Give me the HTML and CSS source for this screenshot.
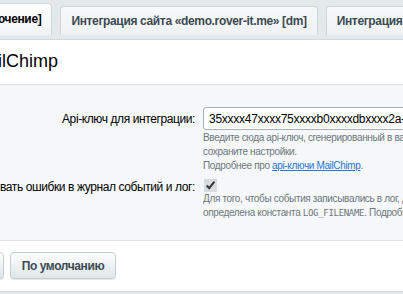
FILE: index.html
```html
<!DOCTYPE html>
<html lang="ru">
<head>
    <meta charset="UTF-8">
    <title>Настройки модуля</title>
    <link rel="stylesheet" href="styles.css">
</head>
<body>
    <div id="tabs">
        <div class="tab tab-active">[Подключение]</div>
        <div class="tab">Интеграция сайта «demo.rover-it.me» [dm]</div>
        <div class="tab">Интеграция сайта «shop.rover-it.me» [sh]</div>
    </div>
    <div id="panel">
        <div class="panel-title">MailChimp</div>
        <div class="form">
            <div class="row">
                <label class="row-label" for="api-key"><span>Api-ключ для интеграции:</span></label>
                <div class="row-field">
                    <input type="text" id="api-key" class="text-input" value="35xxxx47xxxx75xxxxb0xxxxdbxxxx2a-us11">
                    <div class="hint">
                        Введите сюда api-ключ, сгенерированный в вашем аккаунте MailChimp, и<br>
                        сохраните настройки.<br>
                        Подробнее про <a href="#">api-ключи MailChimp</a>.
                    </div>
                </div>
            </div>
            <div class="row row-check">
                <label class="row-label" for="write-log"><span>Записывать ошибки в журнал событий и лог:</span></label>
                <div class="row-field">
                    <input type="checkbox" id="write-log" checked>
                    <div class="hint">
                        Для того, чтобы события записывались в лог, должна быть<br>
                        определена константа <code>LOG_FILENAME</code>. Подробнее
                    </div>
                </div>
            </div>
        </div>
        <div class="buttons">
            <button class="btn">Сохранить</button>
            <button class="btn">По умолчанию</button>
        </div>
    </div>
</body>
</html>
```

FILE: styles.css
```css
body {
    margin: 0;
    padding: 0;
    font-family: "Liberation Sans", Arial, sans-serif;
    background-color: #e3e9eb;
    overflow: hidden;
    width: 403px;
    height: 294px;
}
#tabs {
    display: flex;
    align-items: flex-end;
    gap: 8px;
    height: 35px;
    margin-left: -55px;
    white-space: nowrap;
    overflow: hidden;
}
.tab {
    height: 28px;
    line-height: 28px;
    padding: 0 10px;
    font-size: 12px;
    letter-spacing: -0.35px;
    font-weight: bold;
    color: #3d4a52;
    background: linear-gradient(#f7f9f9, #eef2f3);
    border: 1px solid #cfd6d9;
    border-bottom: none;
    border-radius: 4px 4px 0 0;
    flex-shrink: 0;
}
.tab-active {
    height: 31px;
    line-height: 31px;
    color: #000;
    background: linear-gradient(#fdfefe, #f1f4f5);
}
#panel {
    margin-top: 4px;
    border-top: 1px solid #d2d9dc;
    background-color: #fff;
}
.panel-title {
    height: 44px;
    line-height: 42px;
    font-size: 18px;
    color: #000;
    margin-left: -27px;
}
.form {
    background-color: #f5f7f8;
    border-top: 1px solid #dde2e4;
    padding: 22px 0 20px;
}
.row {
    display: grid;
    grid-template-columns: 195px 1fr;
    column-gap: 8px;
}
.row-check {
    margin-top: 6px;
}
.row-label {
    display: flex;
    justify-content: flex-end;
    white-space: nowrap;
    overflow: hidden;
    font-size: 12px;
    letter-spacing: -0.4px;
    color: #000;
}
.row-label span {
    flex-shrink: 0;
}
.row:first-child .row-label {
    padding-top: 5px;
}
.row-check .row-label {
    padding-top: 1px;
}
.row-field {
    white-space: nowrap;
    overflow: hidden;
}
.text-input {
    box-sizing: border-box;
    width: 240px;
    height: 23px;
    padding: 0 5px;
    border: 1px solid #a7b0b4;
    border-radius: 3px;
    font-family: "Liberation Sans", Arial, sans-serif;
    font-size: 12px;
    letter-spacing: -0.25px;
    color: #000;
    background-color: #fff;
}
.hint {
    font-size: 10px;
    letter-spacing: -0.35px;
    line-height: 14px;
    color: #6e787e;
}
.row:first-child .hint {
    margin-top: 1px;
}
.hint a {
    color: #2675d7;
}
.hint code {
    font-family: "DejaVu Sans Mono", monospace;
    font-size: 9px;
    letter-spacing: -0.3px;
}
#write-log {
    display: block;
    margin: 0 0 0 1px;
    width: 13px;
    height: 13px;
    accent-color: #d7dde0;
}
.buttons {
    display: flex;
    gap: 6px;
    padding: 11px 0 12px;
    margin-left: -81px;
    border-top: 1px solid #dde2e4;
    border-bottom: 1px solid #d2d9dc;
}
.btn {
    height: 27px;
    padding: 0 11px;
    font-family: "Liberation Sans", Arial, sans-serif;
    font-size: 12px;
    letter-spacing: -0.4px;
    font-weight: bold;
    color: #3d4a52;
    background: linear-gradient(#fdfefe, #dfe6e8);
    border: 1px solid #c5cdd1;
    border-radius: 4px;
    box-shadow: 0 1px 1px rgba(0, 0, 0, 0.1);
}
```
